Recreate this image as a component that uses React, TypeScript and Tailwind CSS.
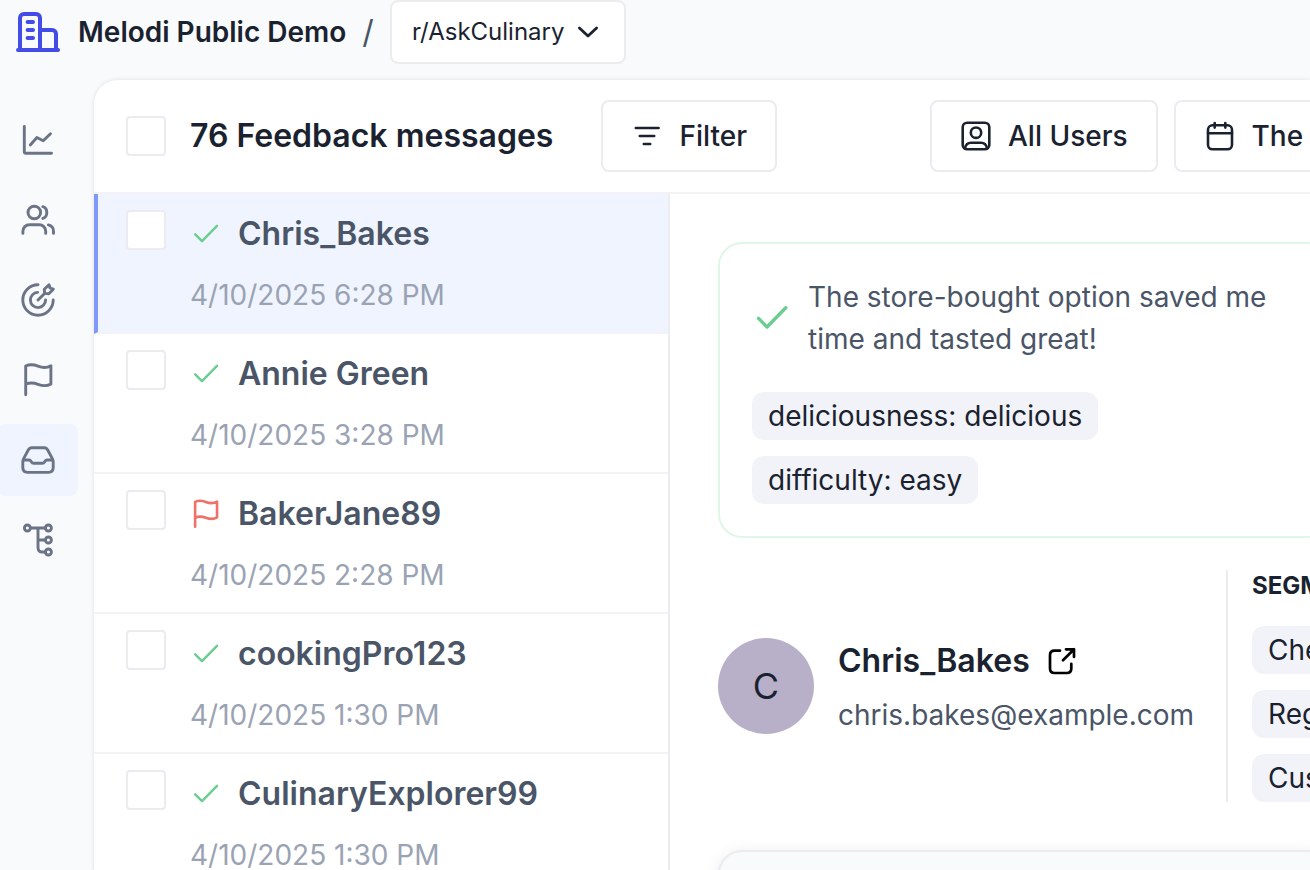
import React from 'react';

type Sentiment = 'positive' | 'negative';

interface Message {
    id: number;
    user: string;
    date: string;
    sentiment: Sentiment;
}

const messages: Message[] = [
    { id: 1, user: 'Chris_Bakes', date: '4/10/2025 6:28 PM', sentiment: 'positive' },
    { id: 2, user: 'Annie Green', date: '4/10/2025 3:28 PM', sentiment: 'positive' },
    { id: 3, user: 'BakerJane89', date: '4/10/2025 2:28 PM', sentiment: 'negative' },
    { id: 4, user: 'cookingPro123', date: '4/10/2025 1:30 PM', sentiment: 'positive' },
    { id: 5, user: 'CulinaryExplorer99', date: '4/10/2025 1:30 PM', sentiment: 'positive' }
];

const attributes = ['deliciousness: delicious', 'difficulty: easy'];
const segments = ['Chefs', 'Regulars', 'Customers'];

interface IconProps {
    viewBox: string;
    width: number;
    className: string;
    children: React.ReactNode;
}

const Icon: React.FC<IconProps> = ({ viewBox, width, className, children }) => (
    <svg
        viewBox={viewBox}
        fill="none"
        stroke="currentColor"
        strokeWidth={width}
        strokeLinecap="round"
        strokeLinejoin="round"
        className={className}
        aria-hidden="true"
    >
        {children}
    </svg>
);

const flagPath = 'M7.7 34.7V6C12 4 15 4.3 20 6.2S29 8 32.9 5.7V24C29 26.3 25 26.2 20 24.3S12 22.3 7.7 24.3';

const navItems = [
    {
        label: 'Analytics',
        icon: (
            <>
                <path d="M6.3 6.5V31.8Q6.3 33.3 7.8 33.3H33.5" />
                <path d="M12.3 25L18.9 17.5L25.2 20.8L32.5 13.7" />
            </>
        )
    },
    {
        label: 'Users',
        icon: (
            <>
                <circle cx="16.3" cy="12.5" r="6.3" />
                <path d="M24.8 6.7C27.2 7.4 28.8 9.8 28.8 12.5S27.2 17.7 24.8 18.4" />
                <path d="M4.9 33.4V31.2C4.9 27.6 7.8 24.7 11.4 24.7H21.2C24.8 24.7 27.7 27.6 27.7 31.2V33.4" />
                <path d="M30.4 24.9C33.4 25.6 35.5 28.2 35.5 31.2V33.4" />
            </>
        )
    },
    {
        label: 'Goals',
        icon: (
            <>
                <path d="M20 4.8A15.2 15.2 0 1 0 35.2 20" />
                <path d="M19.6 12.4A7.6 7.6 0 1 0 27.6 20" />
                <path d="M20 20L26.8 13.3" />
                <path d="M26.6 13.4L26.3 9.3L31 4.8L32 8L35.3 9.2L30.8 13.7Z" />
            </>
        )
    },
    { label: 'Flags', icon: <path d={flagPath} /> },
    {
        label: 'Inbox',
        active: true,
        icon: (
            <>
                <path d="M13.8 7.7H26.2C27.8 7.7 28.9 8.4 29.6 9.8L34.2 18.4C34.9 19.6 35.2 20.5 35.2 21.9V27.6C35.2 30.6 33.4 32.4 30.4 32.4H9.6C6.6 32.4 4.8 30.6 4.8 27.6V21.9C4.8 20.5 5.1 19.6 5.8 18.4L10.4 9.8C11.1 8.4 12.2 7.7 13.8 7.7Z" />
                <path d="M5.3 20H11C13.6 20 13 23.3 15.6 23.3H24.4C27 23.3 26.4 20 29 20H34.7" />
            </>
        )
    },
    {
        label: 'Hierarchy',
        icon: (
            <>
                <circle cx="9.4" cy="8" r="3" />
                <circle cx="30.4" cy="8" r="3" />
                <circle cx="30.4" cy="20" r="3" />
                <circle cx="30.4" cy="32" r="3" />
                <path d="M12.4 8H27.4M20 8V27.4C20 30.2 21.6 32 24.4 32H27.4M20 20H27.4" />
            </>
        )
    }
];

const CheckIcon: React.FC<{ className: string; width?: number }> = ({ className, width = 2.4 }) => (
    <Icon viewBox="0 0 32 32" width={width} className={className}>
        <path d="M5.2 16.3L12 23.2L27 7.8" />
    </Icon>
);

const Checkbox: React.FC<{ label: string }> = ({ label }) => (
    <input
        type="checkbox"
        aria-label={label}
        className="size-10 shrink-0 appearance-none rounded-sm border-2 border-[#ebebf0] bg-white checked:bg-[#444ce7]"
    />
);

const ToolbarButton: React.FC<{ label: string; children: React.ReactNode }> = ({ label, children }) => (
    <button
        type="button"
        className="flex h-18 shrink-0 items-center gap-4 rounded-lg border-2 border-[#ebebf0] bg-white px-7 text-[28px] font-medium whitespace-nowrap"
    >
        <Icon viewBox="0 0 32 32" width={2.6} className="size-8 shrink-0">
            {children}
        </Icon>
        {label}
    </button>
);

const Tag: React.FC<{ text: string }> = ({ text }) => (
    <span className="rounded-xl bg-[#f2f3f8] px-4 text-[28px] leading-12 whitespace-nowrap">{text}</span>
);

const Header: React.FC = () => (
    <header className="mb-4 flex h-16 shrink-0 items-center pl-4">
        <Icon viewBox="0 0 44 40" width={4} className="h-10 w-11 shrink-0 text-[#444ce7]">
            <path d="M2 38H42" />
            <path d="M4 38V6C4 3.6 5.6 2 8 2H20C22.4 2 24 3.6 24 6V38" />
            <path d="M24 18H36C38.4 18 40 19.6 40 22V38" />
            <path d="M11.6 10H17M11.6 18H17M11.6 26H17" />
        </Icon>
        <span className="ml-[18px] text-[28px] font-semibold whitespace-nowrap">Melodi Public Demo</span>
        <span className="mx-4 text-[32px] text-[#4a5567]">/</span>
        <div className="relative">
            <select
                aria-label="Project"
                className="h-16 w-[236px] appearance-none rounded-lg border-2 border-[#ebebf0] bg-white pl-5 text-2xl"
            >
                <option>r/AskCulinary</option>
            </select>
            <Icon viewBox="0 0 24 24" width={2.8} className="pointer-events-none absolute top-5 right-[26px] size-6">
                <path d="M3.4 7.9L12 16L20.6 7.9" />
            </Icon>
        </div>
    </header>
);

const Sidebar: React.FC = () => (
    <nav className="-ml-0.5 flex w-24 shrink-0 flex-col gap-2 pt-6">
        {navItems.map(item => (
            <a
                key={item.label}
                href="#"
                aria-label={item.label}
                className={`flex h-18 w-20 items-center justify-center rounded-lg text-[#6b7487] ${item.active ? 'bg-[#eff4ff]' : ''}`}
            >
                <Icon viewBox="0 0 40 40" width={2.9} className="size-10">
                    {item.icon}
                </Icon>
            </a>
        ))}
    </nav>
);

const Toolbar: React.FC = () => (
    <div className="flex items-center border-b-2 border-[#f2f2f7] px-8 py-5">
        <Checkbox label="Select all" />
        <h1 className="ml-6 text-[32px] font-semibold whitespace-nowrap">76 Feedback messages</h1>
        <div className="ml-12 flex">
            <ToolbarButton label="Filter">
                <path d="M4.8 8H27.6M8.8 16H23.2M12.8 24H19.2" />
            </ToolbarButton>
        </div>
        <div className="ml-[153px] flex gap-4">
            <ToolbarButton label="All Users">
                <rect x="2.7" y="2.7" width="26.6" height="26.6" rx="4.5" />
                <circle cx="16" cy="12.7" r="5.2" />
                <path d="M5 28.4C5.5 25 7.6 22.7 11 22.7H21C24.4 22.7 26.5 25 27 28.4" />
            </ToolbarButton>
            <ToolbarButton label="The past week">
                <rect x="4" y="5.3" width="24" height="24" rx="4.5" />
                <path d="M4 13.3H28M10.7 3V7.6M21.3 3V7.6" />
            </ToolbarButton>
        </div>
    </div>
);

const MessageRow: React.FC<{ message: Message; selected: boolean }> = ({ message, selected }) => (
    <li
        className={`flex items-start gap-6 border-b-2 border-b-[#f2f2f7] py-4 ${selected ? 'border-l-4 border-l-[#8098f9] bg-[#eff4ff] pl-7' : 'pl-8'}`}
    >
        <Checkbox label={`Select ${message.user}`} />
        <div>
            <div className="flex items-center gap-4">
                {message.sentiment === 'positive' ? (
                    <CheckIcon className="size-8 text-[#6bcd8f]" />
                ) : (
                    <Icon viewBox="1.8 1.6 36.8 36.8" width={3} className="size-8 text-[#f07167]">
                        <path d={flagPath} />
                    </Icon>
                )}
                <h2 className="text-[32px] leading-12 font-semibold text-[#4a5567]">{message.user}</h2>
            </div>
            <p className="mt-4 text-[28px] leading-[42px] text-[#9aa3b3]">{message.date}</p>
        </div>
    </li>
);

const Detail: React.FC = () => (
    <section className="flex min-w-[708px] flex-1 flex-col p-12">
        <div className="flex shrink-0 flex-col gap-8 rounded-3xl border-2 border-[#dff8e6] p-8">
            <div className="flex items-center gap-4">
                <CheckIcon width={2.7} className="size-10 shrink-0 text-[#6bcd8f]" />
                <p className="max-w-[480px] text-[28px] leading-[42px] text-[#4a5567]">
                    The store-bought option saved me time and tasted great!
                </p>
            </div>
            <div className="flex flex-col items-start gap-4">
                {attributes.map(text => (
                    <Tag key={text} text={text} />
                ))}
            </div>
        </div>

        <div className="mt-8 flex shrink-0 items-center">
            <div className="flex size-24 shrink-0 items-center justify-center rounded-full bg-[#b8afc9] text-4xl">C</div>
            <div className="ml-6 flex shrink-0 flex-col gap-2">
                <div className="flex items-center gap-4">
                    <h2 className="text-[32px] leading-[50px] font-semibold">Chris_Bakes</h2>
                    <a href="#" aria-label="Open user">
                        <Icon viewBox="0 0 32 32" width={2.7} className="size-8 text-black">
                            <path d="M14 5.7H8.5C5.7 5.7 4 7.4 4 10.2V23.5C4 26.3 5.7 28 8.5 28H20.8C23.6 28 25.3 26.3 25.3 23.5V18.8" />
                            <path d="M17 15.3L28 4.3M20 4.3H28V12" />
                        </Icon>
                    </a>
                </div>
                <p className="text-[28px] leading-[42px] text-[#4a5567]">chris.bakes@example.com</p>
            </div>
            <div className="ml-8 flex flex-col items-start border-l-2 border-[#ebebf0] pl-6">
                <h3 className="mb-6 text-2xl leading-8 font-bold">SEGMENTS</h3>
                <div className="flex flex-col items-start gap-4">
                    {segments.map(text => (
                        <Tag key={text} text={text} />
                    ))}
                </div>
            </div>
        </div>

        <div className="mt-12 h-96 shrink-0 rounded-3xl border-2 border-[#ebebf0] bg-[#f9fafc] shadow-[0_2px_16px_rgba(16,24,40,0.08)]" />
    </section>
);

export default function App() {
    return (
        <div className="flex h-screen flex-col overflow-hidden bg-[#f9fafc] font-['Inter',sans-serif] text-[#1a2230]">
            <Header />
            <div className="flex min-h-0 flex-1">
                <Sidebar />
                <main className="flex min-w-0 flex-1 flex-col overflow-hidden rounded-tl-3xl bg-white shadow-[0_0_4px_rgba(16,24,40,0.12)]">
                    <Toolbar />
                    <div className="flex min-h-0 flex-1">
                        <ul className="w-[576px] shrink-0 border-r-2 border-[#ebebf0]">
                            {messages.map(message => (
                                <MessageRow key={message.id} message={message} selected={message.id === 1} />
                            ))}
                        </ul>
                        <Detail />
                    </div>
                </main>
            </div>
        </div>
    );
}
